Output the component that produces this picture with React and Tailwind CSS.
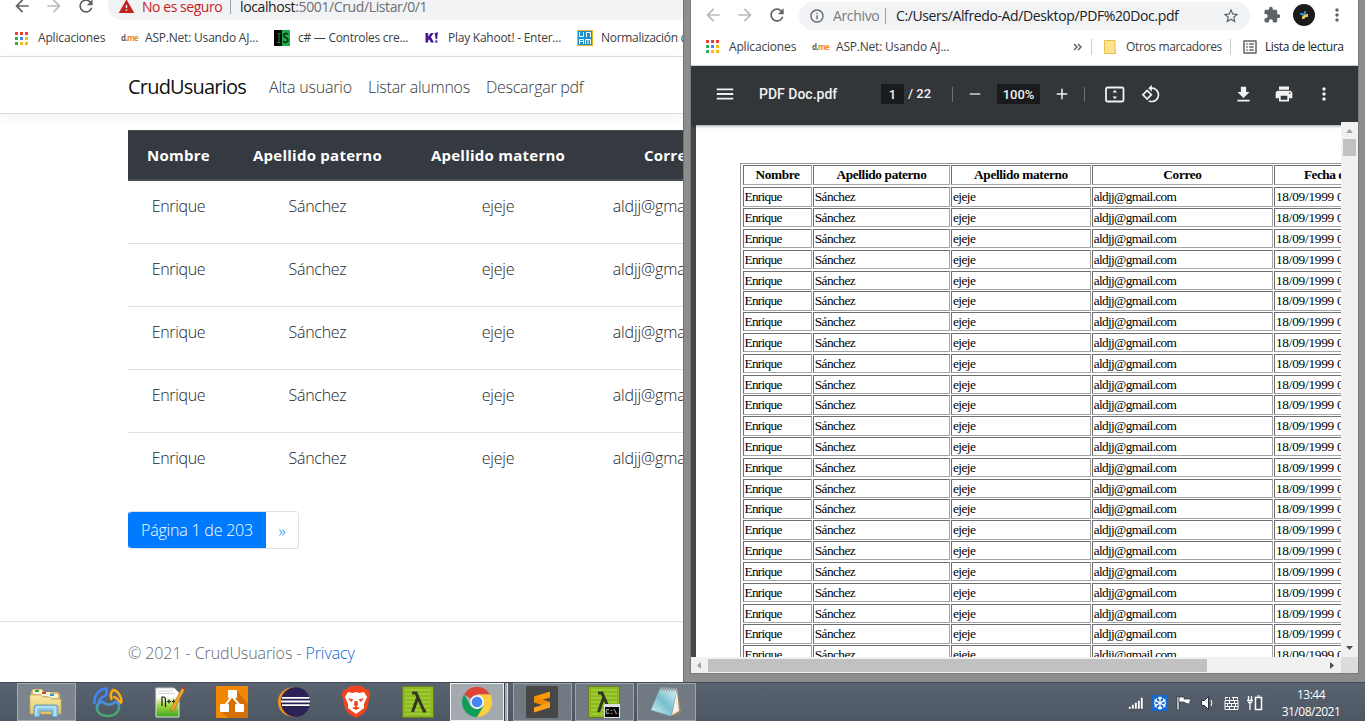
import React from "react";
import {
  MdArrowBack, MdArrowForward, MdRefresh, MdExtension, MdStarBorder, MdInfoOutline, MdMoreVert,
  MdPrint, MdFileDownload, MdMenu, MdRotate90DegreesCcw, MdListAlt, MdWarning, MdAdd, MdRemove,
} from "react-icons/md";

const APP_COLORS = [
  "bg-[#ea4335]", "bg-[#ea4335]", "bg-[#ea4335]",
  "bg-[#34a853]", "bg-[#4285f4]", "bg-[#fbbc05]",
  "bg-[#34a853]", "bg-[#fbbc05]", "bg-[#fbbc05]",
];

function AppsIcon() {
  return (
    <span className="grid shrink-0 grid-cols-3 gap-[2px]">
      {APP_COLORS.map((c, i) => <i key={i} className={"block h-[3px] w-[3px] " + c} />)}
    </span>
  );
}

function DmeIcon() {
  return (
    <span className="block w-4 shrink-0 text-[8px] leading-none font-bold tracking-[-0.7px] text-[#666]">
      d.<span className="text-[#f08a1d]">me</span>
    </span>
  );
}

function JsIcon() {
  return (
    <svg width="16" height="16" viewBox="0 0 16 16" className="shrink-0">
      <path d="M0 0h8v16H0z" fill="#050505" /><path d="M8 0h8v16H8z" fill="#1faa46" />
      <path d="M3.500 3.500h3M5 3.500v8.500M3 12.500h3.500" stroke="#15793a" strokeWidth="1.200" fill="none" />
      <path d="M14 4.500C13 3 9.700 3.300 9.700 5.500S14 7.300 14 10s-3.500 3-4.800 1.300" stroke="#072d12" strokeWidth="1.500" fill="none" />
    </svg>
  );
}

function UnamIcon() {
  return (
    <svg width="16" height="16" viewBox="0 0 16 16" className="shrink-0">
      <rect width="16" height="16" fill="#e8b71c" /><rect x="1" y="1" width="14" height="14" fill="#1a93d0" />
      <path d="M2.500 2v4.500h4V2M9.500 7V2.500h4V7M2.500 14V9.500h4V14M2.500 11.500h4M8.500 14V9.500h5V14M11 9.500V14" stroke="#fff" fill="none" />
    </svg>
  );
}

function KahootIcon() {
  return (
    <svg width="16" height="16" viewBox="0 0 16 16" className="shrink-0" fill="#46178f">
      <path d="M1.500 3h2.700v3.800L6.800 3h3L6.900 7l3.100 5.500H7L5 9.300l-.8 1.100v2.100H1.500zM10.600 3l3.300-.7-.8 7h-1.400zM11.200 10.600l2-.3.3 2.100-2 .4z" />
    </svg>
  );
}

const STUDENT_ROWS = [0, 1, 2, 3, 4];
const STUDENT_COLS = "grid grid-cols-[101px_177px_184px_160px] text-center";

function LeftWindow() {
  return (
    <div className="h-[682px] w-[683px] shrink-0 overflow-hidden bg-white">
      <div className="flex h-5 w-[700px] items-end overflow-hidden">
        <div className="flex h-7 shrink-0 items-center text-[#5f6368]">
          <MdArrowBack size={20} className="ml-3" />
          <MdArrowForward size={20} className="ml-3 text-[#b9bbbd]" />
          <MdRefresh size={20} className="ml-3" />
        </div>
        <div className="ml-3 flex h-7 flex-1 items-center rounded-bl-[14px] bg-[#f1f3f4] pl-2.5 text-[14px]">
          <MdWarning size={17} className="shrink-0 text-[#c5221f]" />
          <span className="ml-[7px] w-[88px] whitespace-nowrap tracking-[-0.45px] text-[#c5221f]">No es seguro</span>
          <i className="block h-4 w-px bg-[#9aa0a6]" />
          <span className="ml-[9px] whitespace-nowrap tracking-[-0.38px] text-[#6b6f73]"><span className="text-[#202124]">localhost</span>:5001/Crud/Listar/0/1</span>
        </div>
      </div>
      <div className="flex h-9 w-[760px] items-center text-[12px] whitespace-nowrap text-[#3c4043]">
        <div className="flex w-[106px] items-center gap-[10px] pl-[15px]"><AppsIcon /><span className="tracking-[-0.17px]">Aplicaciones</span></div>
        <div className="flex w-[153px] items-center gap-2 pl-[15px]"><DmeIcon /><span className="tracking-[-0.2px]">ASP.Net: Usando AJ...</span></div>
        <div className="flex w-[151px] items-center gap-2 pl-[15px]"><JsIcon /><span className="tracking-[-0.27px]">c# — Controles cre...</span></div>
        <div className="flex w-[152px] items-center gap-2 pl-[14px]"><KahootIcon /><span className="tracking-[-0.25px]">Play Kahoot! - Enter...</span></div>
        <div className="flex items-center gap-2 pl-[15px]"><UnamIcon /><span className="tracking-[-0.3px]">Normalización de</span></div>
      </div>
      <div className="flex h-[58px] items-center border-t border-b border-[#dadce0] bg-white pt-[3px] pl-32 text-[16px] font-light text-[#343a40] shadow-[0_4px_12px_rgba(0,0,0,0.05)]">
        <span className="w-[141px] text-[20px] font-normal tracking-[-0.8px] text-[#111]">CrudUsuarios</span>
        <span className="w-[99px] tracking-[-0.2px]">Alta usuario</span>
        <span className="w-[118px] tracking-[-0.25px]">Listar alumnos</span>
        <span className="tracking-[-0.27px]">Descargar pdf</span>
      </div>
      <div className="mt-4 ml-32 w-[622px]">
        <div className={STUDENT_COLS + " h-[51px] border-t border-b-2 border-[#454d55] bg-[#343a40] pt-[12px] text-[15px] leading-6 font-bold tracking-[0.25px] text-white"}>
          <span>Nombre</span><span>Apellido paterno</span><span>Apellido materno</span><span>Correo</span>
        </div>
        {STUDENT_ROWS.map((r) => (
          <div key={r} className={STUDENT_COLS + " h-[63px] pt-3 text-[16px] leading-[26px] font-light text-[#212529] " + (r < 4 ? "border-b border-[#dee2e6]" : "")}>
            <span className="tracking-[-0.35px]">Enrique</span><span className="tracking-[-0.3px]">Sánchez</span><span className="tracking-[-0.2px]">ejeje</span><span className="tracking-[-0.1px]">aldjj@gmail.com</span>
          </div>
        ))}
      </div>
      <div className="mt-[15px] ml-32 flex h-[38px] w-[171px] overflow-hidden rounded border border-l-[#007bff] border-[#dee2e6] text-[16px] leading-[38px] font-light">
        <span className="-my-px -ml-px w-[138px] bg-[#007bff] text-center whitespace-nowrap tracking-[-0.2px] text-white">Página 1 de 203</span>
        <span className="flex-1 text-center text-[#007bff]">»</span>
      </div>
      <div className="mt-[72px] h-[61px] border-t border-[#dee2e6] pt-[1px] pl-32 text-[16px] leading-[60px] font-light tracking-[-0.09px] text-[#5f6870]">
        © 2021 - CrudUsuarios - <span className="text-[#0366d6]">Privacy</span>
      </div>
    </div>
  );
}

const PDF_ROWS = Array.from({ length: 23 }, (_, i) => i);
const PDF_COLS = "grid grid-cols-[69px_136.5px_140.2px_180.5px_200px] gap-x-[1.2px]";
const PDF_CELL = "overflow-hidden whitespace-nowrap border border-t-[#6e6e6e] border-l-[#6e6e6e] border-r-[#a5a5a5] border-b-[#a5a5a5] ";

function PdfTable() {
  return (
    <div className="mt-[38px] ml-11 w-[737px] border-t border-l border-[#999] pt-[1px] pl-[2px] font-['Liberation_Serif',serif] text-[13.3px] text-black">
      <div className={PDF_COLS + " h-[20px] text-center leading-[18px] font-bold tracking-[-0.35px]"}>
        <div className={PDF_CELL}>Nombre</div><div className={PDF_CELL}>Apellido paterno</div>
        <div className={PDF_CELL}>Apellido materno</div><div className={PDF_CELL}>Correo</div>
        <div className={PDF_CELL + "pl-[29px] text-left tracking-[-0.5px]"}>Fecha de nacimiento</div>
      </div>
      <div className="h-[2.300px]" />
      {PDF_ROWS.map((r) => (
        <div key={r} className={PDF_COLS + " h-[20.82px] pb-[1.5px] leading-[17px]"}>
          <div className={PDF_CELL + "pl-[0.5px] tracking-[-0.7px]"}>Enrique</div>
          <div className={PDF_CELL + "pl-[0.5px] tracking-[-0.55px]"}>Sánchez</div>
          <div className={PDF_CELL + "pl-px tracking-[-0.5px]"}>ejeje</div>
          <div className={PDF_CELL + "pl-[0.5px] tracking-[-0.66px]"}>aldjj@gmail.com</div>
          <div className={PDF_CELL + "pl-px tracking-[-0.25px]"}>18/09/1999 0:00:00</div>
        </div>
      ))}
    </div>
  );
}

function FitIcon() {
  return (
    <svg width="20" height="17" viewBox="0 0 20 17" fill="none">
      <rect x="1" y="1.500" width="17.500" height="14" rx="1.500" stroke="#f1f1f1" strokeWidth="1.800" />
      <path d="M9.800 3.800l2.200 2.700H7.600zM9.800 13.200l2.200-2.700H7.600z" fill="#f1f1f1" />
    </svg>
  );
}

function PdfToolbar() {
  return (
    <div className="z-10 flex h-[59px] items-center bg-[#323639] pb-[3px] font-[Roboto,sans-serif] text-[14px] font-medium text-[#f1f1f1] shadow-[0_1px_3px_rgba(0,0,0,0.4)]">
      <MdMenu size={22} className="ml-[23px]" />
      <span className="ml-[23px] w-[122px]">PDF Doc.pdf</span>
      <span className="h-5 w-[23px] bg-[#191b1c] text-center text-[13px] leading-[21px]">1</span>
      <span className="ml-1 w-[44px] text-[13px]">/ 22</span>
      <i className="block h-[15px] w-px bg-[#707375]" />
      <MdRemove size={18} className="ml-[13px] text-[#d0d0d0]" />
      <span className="ml-[13px] h-5 w-[43px] bg-[#191b1c] text-center text-[13px] leading-[21px]">100%</span>
      <MdAdd size={18} className="ml-[13px]" />
      <i className="ml-[13px] block h-[15px] w-px bg-[#707375]" />
      <span className="ml-5"><FitIcon /></span>
      <MdRotate90DegreesCcw size={20} className="ml-4" />
      <span className="flex-1" />
      <MdFileDownload size={21} />
      <MdPrint size={20} className="ml-[20px]" />
      <MdMoreVert size={20} className="mr-6 ml-[20px]" />
    </div>
  );
}

function RightWindow() {
  return (
    <div className="h-[682px] min-w-0 flex-1 border-l border-[#717171] bg-[#8d8d8d] pr-[6px] pb-[8px] pl-[6px]">
      <div className="flex h-[674px] flex-col overflow-hidden border-x border-b border-[#7a7a7a] bg-white">
        <div className="flex h-[30px] shrink-0 items-center text-[#5f6368]">
          <MdArrowBack size={20} className="ml-3 shrink-0 text-[#b9bbbd]" />
          <MdArrowForward size={20} className="ml-3 shrink-0 text-[#b9bbbd]" />
          <MdRefresh size={20} className="ml-3 shrink-0" />
          <div className="mt-px ml-3 flex h-7 w-[451px] shrink-0 items-center rounded-full bg-[#f1f3f4] px-2.5 text-[14px] whitespace-nowrap">
            <MdInfoOutline size={16} className="shrink-0" />
            <span className="ml-2 w-[52px] tracking-[-0.35px] text-[#777b80]">Archivo</span>
            <i className="block h-4 w-px bg-[#9aa0a6]" />
            <span className="ml-[10px] flex-1 tracking-[-0.38px] text-[#202124]">C:/Users/Alfredo-Ad/Desktop/PDF%20Doc.pdf</span>
            <MdStarBorder size={18} className="shrink-0" />
          </div>
          <MdExtension size={18} className="ml-[13px] shrink-0" />
          <span className="ml-[12px] flex h-[22px] w-[22px] shrink-0 items-center justify-center rounded-full bg-[#1b1b1b]">
            <svg width="8" height="8" viewBox="0 0 8 8"><path d="M4 0h2v4H4L2 6V4H0V2h4z" fill="#3d83c4" /><path d="M6 3h2v3H6L4 8H2V6l2-2h2z" fill="#f3c843" /></svg>
          </span>
          <MdMoreVert size={20} className="ml-[12px] shrink-0" />
        </div>
        <div className="flex h-[36px] shrink-0 items-center border-b border-[#dadce0] pb-[2px] text-[12px] whitespace-nowrap text-[#3c4043]">
          <div className="flex w-[106px] items-center gap-[10px] pl-[15px]"><AppsIcon /><span className="tracking-[-0.17px]">Aplicaciones</span></div>
          <div className="flex items-center gap-2 pl-[15px]"><DmeIcon /><span className="tracking-[-0.2px]">ASP.Net: Usando AJ...</span></div>
          <span className="flex-1" />
          <svg width="9" height="8" viewBox="0 0 9 8" fill="none" stroke="#5f6368" strokeWidth="1.500"><path d="M1 1l3 3-3 3M5 1l3 3-3 3" /></svg>
          <i className="ml-[9px] block h-4 w-px bg-[#ccc]" />
          <svg width="12" height="14" viewBox="0 0 12 14" className="ml-3"><path d="M.5.500h10.500v9.500h.5v3.500H.5z" fill="#fee38f" stroke="#e7c04a" /></svg>
          <span className="ml-[10px] w-[104px] tracking-[-0.35px]">Otros marcadores</span>
          <i className="block h-4 w-px bg-[#ccc]" />
          <MdListAlt size={18} className="ml-[10px] text-[#5f6368]" />
          <span className="mr-[14px] ml-[6px] w-[79px] tracking-[-0.4px] text-[#202124]">Lista de lectura</span>
        </div>
        <PdfToolbar />
        <div className="flex min-h-0 flex-1">
          <div className="w-[5px] shrink-0 bg-[#44484c]" />
          <div className="min-w-0 flex-1 overflow-hidden bg-white"><PdfTable /></div>
          <div className="z-20 -mt-[3px] flex w-[17px] shrink-0 flex-col items-center bg-[#f1f1f1]">
            <svg width="17" height="17"><path d="M5 11h7L8.500 7z" fill="#a3a3a3" /></svg>
            <div className="h-[17px] w-[13px] bg-[#c1c1c1]" />
            <span className="flex-1" />
            <svg width="17" height="17"><path d="M5 6h7L8.500 10z" fill="#505050" /></svg>
          </div>
        </div>
        <div className="flex h-[16px] shrink-0 items-center bg-[#f1f1f1]">
          <svg width="17" height="17"><path d="M10 5v7L6 8.500z" fill="#a3a3a3" /></svg>
          <div className="h-[13px] w-[499px] bg-[#c1c1c1]" />
          <span className="flex-1" />
          <svg width="17" height="17"><path d="M6 5v7l4-3.500z" fill="#505050" /></svg>
          <div className="h-[16px] w-[17px] bg-[#dcdcdc]" />
        </div>
      </div>
    </div>
  );
}

function ExplorerIcon() {
  return (
    <svg width="34" height="32" viewBox="0 0 34 32">
      <defs><linearGradient id="fold" x1="0" y1="0" x2="0" y2="1"><stop stopColor="#f8eaa8" /><stop offset="1" stopColor="#e6c864" /></linearGradient></defs>
      <path d="M2 6l2-3h9l2 3h14l2 3v18H2z" fill="#dcbd64" />
      <path d="M4 4h9v4H4zM12 6h9v4h-9zM19 8h10v4H19z" fill="#f7f3e2" />
      <path d="M6 4h4v2H6z" fill="#30a445" /><path d="M13 6h4v2h-4z" fill="#d24425" /><path d="M21 8h4v2h-4z" fill="#2f98d4" />
      <path d="M1 9h11l2 2h7l2 2h9v15H1z" fill="url(#fold)" stroke="#c6a44e" strokeWidth=".7" />
      <path d="M5 21q0-2 2-2h20q2 0 2 2v10h-6v-6H11v6H5z" fill="#8fc9e8" stroke="#508eb3" strokeWidth=".8" />
      <path d="M7 21h20M7 22v8M26 22v8" stroke="#d5f1fc" strokeWidth="1.200" />
    </svg>
  );
}

function NavicatIcon() {
  return (
    <svg width="32" height="32" viewBox="0 0 32 32" fill="none" strokeWidth="2.500" strokeLinecap="round" strokeLinejoin="round">
      <defs><linearGradient id="ring" x1="0" y1="0" x2="0" y2="1"><stop stopColor="#458ee8" /><stop offset=".8" stopColor="#45ad68" /></linearGradient></defs>
      <path d="M2.500 17C1.500 10 7 3.500 13 2.500c2 0 2 3.500 1.300 6C12.500 11 9.500 10.500 7.500 14c-.6 1.500-.3 3-1 3.500" stroke="#4285f4" />
      <path d="M19.500 13C18.500 10 18.500 6.500 21 4c3-.5 8.500 5 8.500 12-1.500 1.500-2.500 0-3-1.500-1-2-2.500-3-4.500-3.500" stroke="#f9ab1a" />
      <path d="M10 15.500c-5 2-6 5.500-4.500 9.500C9 31.500 22.500 31.500 26 25c2-4 1-7.500-2-9.500-4.500 4-9.500 4-14 0z" stroke="url(#ring)" />
    </svg>
  );
}

function NppIcon() {
  return (
    <svg width="32" height="34" viewBox="0 0 32 34">
      <defs><linearGradient id="npp" x1="0" y1="0" x2="0" y2="1"><stop offset=".3" stopColor="#fff" /><stop offset=".6" stopColor="#a4d845" /><stop offset="1" stopColor="#38a51d" /></linearGradient></defs>
      <path d="M2 3h18l5 5v24H2z" fill="url(#npp)" stroke="#dfe3e1" />
      <path d="M3 2.500h17" stroke="#888" strokeWidth="1.500" strokeDasharray="1.500 1.500" />
      <path d="M4 6h15M4 8.500h17" stroke="#b2bbc0" strokeWidth=".6" />
      <path d="M8 21v-9h1.500q2 0 2 3v7M13 16.500h4M15 14.500v4M17.800 16.500h4M19.800 14.500v4" stroke="#172016" strokeWidth="1.200" fill="none" />
      <path d="M28 3l2.700 1.600L20 25l-3 2 .3-4z" fill="#f5a72c" stroke="#a76418" strokeWidth=".6" /><path d="M28 3l2.700 1.600 1-2-2.500-1.400z" fill="#b92f32" />
    </svg>
  );
}

function DrawioIcon() {
  return (
    <svg width="32" height="32" viewBox="0 0 32 32">
      <path d="M0 0h32v32H0z" fill="#f08705" /><path d="M20 4l12 14v14H12L6 26l10-14z" fill="#d66f05" />
      <path d="M16 10L8 21M16 10l9 11" stroke="#fff" strokeWidth="2" />
      <rect x="12" y="4" width="9" height="8" rx="1" fill="#fff" /><rect x="4" y="18" width="9" height="8" rx="1" fill="#fff" /><rect x="19" y="18" width="9" height="8" rx="1" fill="#fff" />
    </svg>
  );
}

function EclipseIcon() {
  return (
    <svg width="34" height="32" viewBox="0 0 34 32">
      <circle cx="15.500" cy="16" r="14.500" fill="#f7941e" /><circle cx="18.500" cy="16" r="14.700" fill="#2c2255" />
      <path d="M5 11.800h27.500M4 15.500h29M5 19.200h27.500" stroke="#fff" strokeWidth="1.800" />
    </svg>
  );
}

function BraveIcon() {
  return (
    <svg width="28" height="32" viewBox="0 0 28 32">
      <path d="M8 0h12l3 3 4 1 1 5-3 14-4 5-7 4-7-4-4-5L0 9l1-5 4-1z" fill="#f4441f" />
      <path d="M6 6l5 1 3-1 3 1 5-1 3 5-3 7v4l-4 3-4 3-4-3-4-3v-4l-3-7z" fill="#fff" />
      <path d="M6 12l5.500 1.500L9 16zM22 12l-5.500 1.500L19 16zM12.500 15h3l.5 4-2 2-2-2zM10 22l4-1.500 4 1.500-4 2z" fill="#f4441f" />
    </svg>
  );
}

function CmderIcon({ terminal }) {
  return (
    <svg width="32" height="32" viewBox="0 0 32 32">
      <rect x=".5" y=".5" width="31" height="31" fill="#8cb91c" stroke="#687d2a" />
      <path d="M3 4h26M3 8h26M3 12h26M3 16h26M3 20h26M3 24h26M3 28h26" stroke="#a5cf40" strokeWidth="1.500" />
      <path d="M10 7h4l8 18h2M15.500 12l-5 14" stroke="#32371d" strokeWidth="3" fill="none" />
      {terminal && <g><path d="M16 18h16v14H16z" fill="#dedede" /><path d="M17 21h14v10H17z" fill="#080808" /><text x="17.500" y="28" fill="#fff" fontSize="6.500" fontFamily="Liberation Mono, monospace">C:\.</text></g>}
    </svg>
  );
}

function ChromeIcon() {
  return (
    <svg width="30" height="30" viewBox="0 0 30 30">
      <path d="M15 15L2 7.500A15 15 0 0128 7.500H15z" fill="#db4437" />
      <path d="M28 7.500H15L21.500 18.800 15 30A15 15 0 0028 7.500z" fill="#ffcd40" />
      <path d="M2 7.500l6.500 11.300 6.500 3.700L21.500 19 15 30A15 15 0 012 7.500z" fill="#0f9d58" />
      <circle cx="15" cy="15" r="7" fill="#f5f5f5" /><circle cx="15" cy="15" r="5.300" fill="#4285f4" />
    </svg>
  );
}

function SublimeIcon() {
  return (
    <svg width="32" height="32" viewBox="0 0 32 32">
      <rect width="32" height="32" rx="1.500" fill="#474747" />
      <path d="M8 10.500l16-5v6l-16 5z" fill="#ff9800" /><path d="M8 10.500l16 5.500v5.500L8 16.500z" fill="#f08a00" /><path d="M8 21.500l16-5v5l-16 5z" fill="#ffa218" />
    </svg>
  );
}

function NotepadIcon() {
  return (
    <svg width="32" height="32" viewBox="0 0 32 32">
      <defs><linearGradient id="note" x1="1" y1="0" x2="0" y2="1"><stop stopColor="#e2f6f8" /><stop offset=".5" stopColor="#77bfce" /><stop offset="1" stopColor="#d8f3f8" /></linearGradient></defs>
      <path d="M27 4l4 22-8 4-4-4z" fill="#ad8756" /><path d="M27 4l2 21-7 4z" fill="#f2f2eb" />
      <path d="M10 3l17 1-6 26-20-6z" fill="url(#note)" stroke="#8db7c0" strokeWidth=".5" />
      <path d="M11 3l16 1" stroke="#a7abac" strokeWidth="4" strokeDasharray="1.500 1" />
    </svg>
  );
}

function TaskSlot({ children, frame }) {
  return (
    <div className="flex w-[62px] shrink-0 justify-center">
      <div className={"flex w-[59px] items-center justify-center " + (frame || "")}>{children}</div>
    </div>
  );
}

const OPEN_FRAME = "border border-[#9ca4ac] bg-[#717983]";

function Tray() {
  return (
    <div className="flex items-center gap-[8px] pt-[1px]">
      <svg width="16" height="16" viewBox="0 0 16 16" fill="#fff" stroke="#27303a" strokeWidth=".4"><path d="M.5 11.500H3V14H.5zM3.500 9.500H6V14H3.500zM6.500 7.500H9V14H6.500zM9.500 5.500H12V14H9.500zM12.500 2.500H15V14h-2.500z" /></svg>
      <svg width="16" height="16" viewBox="0 0 16 16"><rect width="16" height="16" fill="#1769cf" /><path d="M8 1.500v13M2.400 4.700l11.200 6.600M2.400 11.300l11.200-6.600M6 2.500l2 2 2-2M6 13.500l2-2 2 2M2 7.500l2.600-1.300L4 3.500M14 8.500l-2.600 1.300.6 2.700M2 8.500l2.600 1.300-.6 2.700M14 7.500l-2.600-1.300.6-2.700" stroke="#fff" strokeWidth="1.200" fill="none" /></svg>
      <svg width="16" height="16" viewBox="0 0 16 16"><path d="M1 1.500h2V15H1z" fill="#fff" stroke="#27303a" strokeWidth=".7" /><path d="M3 2h5v2h7q-2 3-1 5-4 0-6-2H3z" fill="#fff" stroke="#27303a" strokeWidth=".7" /></svg>
      <svg width="16" height="16" viewBox="0 0 16 16"><path d="M1.500 5.500h3l4-4v13l-4-4h-3z" fill="#fff" stroke="#27303a" /><path d="M11 5q2 3 0 6" stroke="#fff" fill="none" /></svg>
      <svg width="15" height="14" viewBox="0 0 15 14" stroke="#fff" fill="none"><path d="M1.500 1v2.500M5.500 1v2.500M9.500 1v2.500M13.500 1v2.500M1 1.500h3M8 1.500h5M1 4.500h13v9H1zM1 7.500h13M1 10.500h13M5.500 4.500v3M10.500 4.500v3M7.500 7.500v3M3.500 7.500v3M11.500 7.500v3M5.500 10.500v3M10.500 10.500v3" /></svg>
      <svg width="16" height="16" viewBox="0 0 16 16" fill="none"><path d="M1.500 1v4M4.500 1v4M0 5.500h6M1 7.500h4M3 8v7" stroke="#fff" strokeWidth="1.300" /><rect x="8.500" y="2.500" width="6" height="12" fill="#46505b" stroke="#fff" strokeWidth="1.500" /><path d="M10 1h3" stroke="#fff" /></svg>
    </div>
  );
}

function Taskbar() {
  return (
    <div className="flex h-[39px] border-t border-[#414a54] bg-linear-to-b from-[#596470] to-[#4d5763] pl-[15px]">
      <TaskSlot frame="border border-[#a4aab1] bg-[#7c848d]"><ExplorerIcon /></TaskSlot>
      <TaskSlot><NavicatIcon /></TaskSlot>
      <TaskSlot><NppIcon /></TaskSlot>
      <TaskSlot><DrawioIcon /></TaskSlot>
      <TaskSlot><EclipseIcon /></TaskSlot>
      <TaskSlot><BraveIcon /></TaskSlot>
      <TaskSlot><CmderIcon /></TaskSlot>
      <div className="flex w-[62px] shrink-0 pl-[1px]">
        <div className="flex w-[54px] items-center justify-center border border-[#f0f1f2] bg-[#a4a9b0]"><ChromeIcon /></div>
        <i className="block w-[4px] border-r border-l border-r-[#dfe1e3] border-l-[#3b434c] bg-[#a4a9b0]" />
      </div>
      <TaskSlot frame={OPEN_FRAME}><SublimeIcon /></TaskSlot>
      <TaskSlot frame={OPEN_FRAME}><CmderIcon terminal /></TaskSlot>
      <TaskSlot frame={OPEN_FRAME}><NotepadIcon /></TaskSlot>
      <span className="flex-1" />
      <Tray />
      <div className="mr-[22px] ml-[16px] flex w-[64px] flex-col items-center pt-[3px] text-[12px] leading-[17px] tracking-[-0.5px] whitespace-nowrap text-white">
        <span>13:44</span><span>31/08/2021</span>
      </div>
    </div>
  );
}

export default function App() {
  return (
    <div className="h-[721px] w-[1365px] overflow-hidden bg-white font-['Open_Sans','Noto_Sans',sans-serif]">
      <div className="flex"><LeftWindow /><RightWindow /></div>
      <Taskbar />
    </div>
  );
}
